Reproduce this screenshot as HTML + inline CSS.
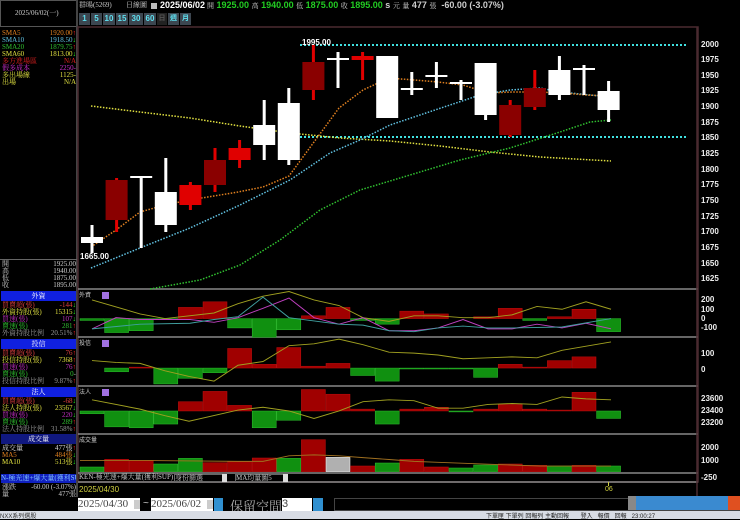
<!DOCTYPE html>
<html><head><meta charset="utf-8"><style>
*{margin:0;padding:0;box-sizing:border-box}
body{width:740px;height:519px;background:#000;overflow:hidden;position:relative;font-family:"Liberation Sans","Noto Sans CJK TC",sans-serif;color:#ddd}
.a{position:absolute;white-space:nowrap}
.s{font-family:"Liberation Serif","Noto Serif CJK SC",serif;font-size:7px;line-height:7.3px}
.row{position:absolute;left:2px;width:74px;height:7.3px}
.row .l{position:absolute;left:0}
.row .r{position:absolute;right:0}
.hd{position:absolute;left:1px;width:75px;height:10px;background:#1020e0;color:#fff;font-size:7px;text-align:center;line-height:10px;font-family:"Liberation Serif","Noto Serif CJK SC",serif}
.btn{position:absolute;top:13px;height:12px;background:#3c4650;color:#5ee0f0;font-size:8px;font-weight:bold;text-align:center;line-height:12px}
.sc{position:absolute;left:701px;font-size:8px;font-weight:bold;color:#eee}
</style></head><body>

<!-- left panel -->
<div class="a" style="left:0;top:0;width:77px;height:27px;border:1px solid #555;"></div>
<div class="a s" style="left:15px;top:10px;color:#ccc">2025/06/02(一)</div>
<div class="a" style="left:76px;top:0;width:2px;height:497px;background:#444"></div>
<div class="s">
<div class="row" style="top:30px;color:#e08020"><span class="l">SMA5</span><span class="r">1920.00<b style="color:#f22">↑</b></span></div>
<div class="row" style="top:37px;color:#60c0e0"><span class="l">SMA10</span><span class="r">1918.50<b style="color:#2e2">↓</b></span></div>
<div class="row" style="top:44px;color:#30c030"><span class="l">SMA20</span><span class="r">1879.75<b style="color:#f22">↑</b></span></div>
<div class="row" style="top:51px;color:#e0e040"><span class="l">SMA60</span><span class="r">1813.00<b style="color:#2e2">↓</b></span></div>
<div class="row" style="top:58px;color:#e02020"><span class="l">多方進場區</span><span class="r">N/A</span></div>
<div class="row" style="top:65px;color:#d030d0"><span class="l">假多成本</span><span class="r">2250-</span></div>
<div class="row" style="top:72px;color:#e0e040"><span class="l">多出場線</span><span class="r">1125-</span></div>
<div class="row" style="top:79px;color:#e0e040"><span class="l">出場</span><span class="r">N/A</span></div>
</div>
<div class="a" style="left:0;top:259px;width:77px;height:1px;background:#666"></div>
<div class="s" style="color:#ccc">
<div class="row" style="top:261px"><span class="l">開</span><span class="r">1925.00</span></div>
<div class="row" style="top:268px"><span class="l">高</span><span class="r">1940.00</span></div>
<div class="row" style="top:275px"><span class="l">低</span><span class="r">1875.00</span></div>
<div class="row" style="top:282px"><span class="l">收</span><span class="r">1895.00</span></div>
</div>
<div class="hd" style="top:291px">外資</div>
<div class="s">
<div class="row" style="top:302px;color:#e04040"><span class="l">買賣超(張)</span><span class="r">-144<b style="color:#2e2">↓</b></span></div>
<div class="row" style="top:309px;color:#e0e040"><span class="l">外資持股(張)</span><span class="r">15315<b style="color:#2e2">↓</b></span></div>
<div class="row" style="top:316px;color:#c030c0"><span class="l">買速(張)</span><span class="r">107<b style="color:#2e2">↓</b></span></div>
<div class="row" style="top:323px;color:#30c030"><span class="l">賣速(張)</span><span class="r">281<b style="color:#f22">↑</b></span></div>
<div class="row" style="top:330px;color:#999"><span class="l">外資持股比例</span><span class="r">20.51%<b style="color:#f22">↑</b></span></div>
</div>
<div class="hd" style="top:339px">投信</div>
<div class="s">
<div class="row" style="top:350px;color:#e04040"><span class="l">買賣超(張)</span><span class="r">76<b style="color:#f22">↑</b></span></div>
<div class="row" style="top:357px;color:#e0e040"><span class="l">投信持股(張)</span><span class="r">7368<b style="color:#f22">↑</b></span></div>
<div class="row" style="top:364px;color:#c030c0"><span class="l">買速(張)</span><span class="r">76<b style="color:#f22">↑</b></span></div>
<div class="row" style="top:371px;color:#30c030"><span class="l">賣速(張)</span><span class="r">0<b style="color:#999">-</b></span></div>
<div class="row" style="top:378px;color:#999"><span class="l">投信持股比例</span><span class="r">9.87%<b style="color:#f22">↑</b></span></div>
</div>
<div class="hd" style="top:387px">法人</div>
<div class="s">
<div class="row" style="top:398px;color:#e04040"><span class="l">買賣超(張)</span><span class="r">-68<b style="color:#2e2">↓</b></span></div>
<div class="row" style="top:405px;color:#e0e040"><span class="l">法人持股(張)</span><span class="r">23567<b style="color:#2e2">↓</b></span></div>
<div class="row" style="top:412px;color:#c030c0"><span class="l">買速(張)</span><span class="r">220<b style="color:#2e2">↓</b></span></div>
<div class="row" style="top:419px;color:#30c030"><span class="l">賣速(張)</span><span class="r">289<b style="color:#f22">↑</b></span></div>
<div class="row" style="top:426px;color:#999"><span class="l">法人持股比例</span><span class="r">31.58%<b style="color:#f22">↑</b></span></div>
</div>
<div class="hd" style="top:434px;background:#101880">成交量</div>
<div class="s">
<div class="row" style="top:445px;color:#ddd"><span class="l">成交量</span><span class="r">477張<b style="color:#f22">↑</b></span></div>
<div class="row" style="top:452px;color:#e08020"><span class="l">MA5</span><span class="r">484張<b style="color:#2e2">↓</b></span></div>
<div class="row" style="top:459px;color:#e0e040"><span class="l">MA10</span><span class="r">513張<b style="color:#2e2">↓</b></span></div>
</div>
<div class="a s" style="left:1px;top:474px;width:75px;height:9px;background:#1020c0;color:#8cf;line-height:9px;overflow:hidden">N-極光速+爆大量(獲利SU</div>
<div class="s">
<div class="row" style="top:484px;color:#ccc"><span class="l">漲跌</span><span class="r">-60.00 (-3.07%)</span></div>
<div class="row" style="top:491px;color:#ccc"><span class="l">量</span><span class="r">477張</span></div>
</div>

<!-- top bar -->
<div class="a s" style="left:79px;top:2px;color:#ccc">群暘(5269)</div>
<div class="a s" style="left:126px;top:2px;color:#ccc">日線圖</div>
<div class="a" style="left:151px;top:3px;width:6px;height:6px;background:#bbb"></div>
<div class="a" style="left:160px;top:0px;font-size:9px;font-weight:bold;color:#fff">2025/06/02</div>
<div class="a" style="left:207px;top:0px;font-size:9px;font-weight:bold;color:#ccc"><span class="s" style="font-weight:normal">開</span> <span style="color:#2c2">1925.00</span> <span class="s" style="font-weight:normal">高</span> <span style="color:#2c2">1940.00</span> <span class="s" style="font-weight:normal">低</span> <span style="color:#2c2">1875.00</span> <span class="s" style="font-weight:normal">收</span> <span style="color:#2c2">1895.00</span> s <span class="s" style="font-weight:normal">元</span> <span class="s" style="font-weight:normal">量</span> 477 <span class="s" style="font-weight:normal">張</span> &nbsp;-60.00 (-3.07%)</div>
<div class="btn" style="left:79px;width:11px">1</div>
<div class="btn" style="left:91px;width:11px">5</div>
<div class="btn" style="left:103px;width:12px">10</div>
<div class="btn" style="left:116px;width:12px">15</div>
<div class="btn" style="left:129px;width:14px">30</div>
<div class="btn" style="left:144px;width:12px">60</div>
<div class="btn" style="left:157px;width:10px;background:#222;color:#555;font-size:7px">日</div>
<div class="btn" style="left:168px;width:11px;font-size:7px">週</div>
<div class="btn" style="left:180px;width:11px;font-size:7px">月</div>

<svg class="a" style="left:0;top:0" width="740" height="519" id="sv">
<rect x="78" y="27" width="620" height="455" fill="none" stroke="#4a2a30" stroke-width="1.5"/>
<g stroke="#888" stroke-width="1.5">
<line x1="78" y1="289" x2="698" y2="289"/><line x1="78" y1="337" x2="698" y2="337"/><line x1="78" y1="386" x2="698" y2="386"/><line x1="78" y1="434" x2="698" y2="434"/><line x1="78" y1="473" x2="698" y2="473"/><line x1="78" y1="482" x2="698" y2="482"/></g>
<line x1="697" y1="27" x2="697" y2="497" stroke="#4a2a30" stroke-width="1.5"/>
<!-- main dotted lines -->
<line x1="300" y1="45" x2="686" y2="45" stroke="#40e0e0" stroke-width="2" stroke-dasharray="2,2"/>
<line x1="300" y1="137" x2="686" y2="137" stroke="#40e0e0" stroke-width="2" stroke-dasharray="2,2"/>
<polyline fill="none" stroke="#e0e040" stroke-width="1.5" stroke-dasharray="1.5,1.5" points="91,106 140,112 190,118 240,126 290,133 340,138 390,141 440,146 490,152 540,157 575,159 611,161"/>
<polyline fill="none" stroke="#30c030" stroke-width="1.5" stroke-dasharray="1.5,1.5" points="150,289 200,280 240,265 280,240 320,210 360,190 410,175 460,160 510,148 560,132 590,122 611,120"/>
<polyline fill="none" stroke="#60c0e0" stroke-width="1.5" stroke-dasharray="1.5,1.5" points="91,268 140,248 190,228 240,205 290,180 330,153 360,140 390,125 420,115 450,105 480,95 510,90 540,88 560,92 590,95 611,97"/>
<polyline fill="none" stroke="#e08020" stroke-width="1.5" stroke-dasharray="1.5,1.5" points="91,247 116,230 140,212 165,205 189,200 214,196 238,192 263,187 289,176 314,142 339,108 363,90 389,78 414,80 438,82 463,85 488,93 512,92 537,92 562,93 586,95 611,96"/>
<g id="cd"></g>
<g transform="matrix(1,0,0,0.9333,0,19)">
<g id="sub"></g>
<polyline fill="none" stroke="#a0a020" stroke-width="1" points="92,301 140,316 165,321 214,315 238,305 263,297 289,292 314,301 339,307 363,320 389,324 414,318 438,318 463,320 488,320 512,317 537,308 562,311 586,303 611,311"/>
<polyline fill="none" stroke="#c040c0" stroke-width="1" points="92,332 116,320 140,322 190,322 214,325 238,320 263,310 289,299 314,320 339,327 363,320 389,334 414,334 438,331 463,322 488,332 512,332 537,327 562,331 586,326 611,332"/>
<polyline fill="none" stroke="#40a0a0" stroke-width="1" points="92,332 140,327 190,326 214,322 238,319 263,298 289,320 339,327 363,328 389,334 414,335 438,331 463,329 488,331 512,331 562,330 611,321"/>
<polyline fill="none" stroke="#a0a020" stroke-width="1" points="92,366 116,368 140,369 165,377 189,383 214,388 238,371 263,367 289,350 314,348 339,343 363,349 389,357 414,358 438,360 463,364 488,363 512,362 537,363 562,355 611,346"/>
<polyline fill="none" stroke="#a0a020" stroke-width="1" points="92,408 140,418 165,425 189,431 238,419 263,416 289,420 314,428 339,420 363,410 389,408 414,409 438,417 463,417 488,413 512,412 537,413 562,405 586,407 611,408"/>
<polyline fill="none" stroke="#a07020" stroke-width="1" points="80,473 140,473 238,474 263,474 289,468 314,467 339,468 363,470 389,472 414,474 438,475 488,477 540,479 611,479"/>
</g>
</svg>

<div class="a" style="left:302px;top:38px;font-size:8px;font-weight:bold;color:#fff">1995.00</div>
<div class="a" style="left:80px;top:252px;font-size:8px;font-weight:bold;color:#fff">1665.00</div>
<div class="a" style="left:79px;top:290px;font-size:6px;color:#ccc">外資</div>
<div class="a" style="left:79px;top:338px;font-size:6px;color:#ccc">投信</div>
<div class="a" style="left:79px;top:387px;font-size:6px;color:#ccc">法人</div>
<div class="a" style="left:79px;top:435px;font-size:6px;color:#ccc">成交量</div>
<div class="a" style="left:102px;top:292px;width:7px;height:7px;background:#a070e0"></div>
<div class="a" style="left:102px;top:340px;width:7px;height:7px;background:#a070e0"></div>
<div class="a" style="left:102px;top:389px;width:7px;height:7px;background:#a070e0"></div>

<div class="sc" style="top:40px">2000</div><div class="sc" style="top:55px">1975</div><div class="sc" style="top:71px">1950</div><div class="sc" style="top:86px">1925</div><div class="sc" style="top:102px">1900</div><div class="sc" style="top:118px">1875</div><div class="sc" style="top:133px">1850</div><div class="sc" style="top:149px">1825</div><div class="sc" style="top:165px">1800</div><div class="sc" style="top:180px">1775</div><div class="sc" style="top:196px">1750</div><div class="sc" style="top:212px">1725</div><div class="sc" style="top:227px">1700</div><div class="sc" style="top:243px">1675</div><div class="sc" style="top:259px">1650</div><div class="sc" style="top:274px">1625</div>
<div class="sc" style="top:295px">200</div><div class="sc" style="top:305px">100</div><div class="sc" style="top:314px">0</div><div class="sc" style="top:323px">-100</div>
<div class="sc" style="top:349px">100</div><div class="sc" style="top:365px">0</div>
<div class="sc" style="top:394px">23600</div><div class="sc" style="top:406px">23400</div><div class="sc" style="top:418px">23200</div>
<div class="sc" style="top:443px">2000</div><div class="sc" style="top:456px">1000</div><div class="sc" style="top:473px">-250</div>

<!-- timeline row -->
<div class="a s" style="left:79px;top:474px;color:#ccc">KEN-極光速+爆大量(獲利SUP)</div>
<div class="a s" style="left:174px;top:474px;width:50px;height:8px;border:1px solid #666;color:#ccc;background:#000">身份篩選</div>
<div class="a" style="left:222px;top:474px;width:5px;height:8px;background:#ddd"></div>
<div class="a s" style="left:235px;top:474px;width:50px;height:8px;border:1px solid #666;color:#ccc;background:#000">MA均量圖5</div>
<div class="a" style="left:283px;top:474px;width:5px;height:8px;background:#ddd"></div>
<div class="a" style="left:79px;top:485px;font-size:8px;color:#d0d040">2025/04/30</div>
<div class="a" style="left:608px;top:482px;width:1px;height:4px;background:#d0d040"></div>
<div class="a" style="left:605px;top:486px;font-size:7px;color:#d0d040">06</div>
<!-- date row -->
<div class="a" style="left:77px;top:497px;width:663px;height:15px;background:#000"></div>
<div class="a" style="left:78px;top:498px;width:62px;height:13px;background:#fff;color:#444;font-size:11px;line-height:13px;font-family:'Liberation Serif',serif">2025/04/30</div>
<div class="a" style="left:134px;top:500px;width:6px;height:9px;background:#ccc"></div>
<div class="a" style="left:143px;top:498px;color:#ccc;font-size:10px">~</div>
<div class="a" style="left:151px;top:498px;width:62px;height:13px;background:#fff;color:#444;font-size:11px;line-height:13px;font-family:'Liberation Serif',serif">2025/06/02</div>
<div class="a" style="left:207px;top:500px;width:6px;height:9px;background:#ccc"></div>
<div class="a" style="left:214px;top:498px;width:9px;height:13px;background:#3090d0"></div>
<div class="a" style="left:230px;top:496px;color:#aaa;font-size:13px;font-family:'Noto Serif CJK SC',serif">保留空間</div>
<div class="a" style="left:282px;top:498px;width:30px;height:13px;background:#fff;color:#444;font-size:11px;line-height:13px">3</div>
<div class="a" style="left:313px;top:498px;width:10px;height:13px;background:#3090d0"></div>
<div class="a" style="left:334px;top:498px;width:406px;height:13px;border:1px solid #444"></div>
<div class="a" style="left:636px;top:496px;width:104px;height:14px;background:#3a8ad0"></div>
<div class="a" style="left:628px;top:496px;width:8px;height:14px;background:#888"></div>
<div class="a" style="left:728px;top:496px;width:12px;height:14px;background:#e05020"></div>
<!-- status bar -->
<div class="a" style="left:0;top:511px;width:740px;height:8px;background:#d8dce4"></div>
<div class="a" style="left:0;top:511px;font-size:6px;color:#333">NXX系列選股</div>
<div class="a" style="left:486px;top:511px;font-size:6px;color:#222">下單匣 下單列 回報列 主動回報 &nbsp; &nbsp; &nbsp; 登入 &nbsp; 報價 &nbsp; 回報 &nbsp; 23:00:27</div>

<script>
var NS="http://www.w3.org/2000/svg";
function el(g,t,a){var e=document.createElementNS(NS,t);for(var k in a)e.setAttribute(k,a[k]);g.appendChild(e);}
var cd=document.getElementById('cd');
var C=[['w',237,243,225,253],['d',180,220,178,232],['w',176,178,176,248],['w',192,225,158,232],['r',185,205,182,210],['d',160,185,148,192],['r',148,160,140,168],['w',125,145,100,160],['w',103,160,88,165],['d',62,90,45,100],['w',58,60,52,88],['r',56,60,52,80],['w',56,118,56,118],['w',88,89,72,95],['w',75,76,62,88],['w',82,83,80,100],['w',63,115,63,120],['d',105,135,100,137],['d',88,107,70,110],['w',70,95,56,100],['w',68,69,65,95],['w',91,110,81,122]];
C.forEach(function(c,i){var x=92+24.6*i;var col=c[0]=='w'?'#fff':(c[0]=='d'?'#8a0000':'#e00000');
el(cd,'rect',{x:x-1.5,y:c[3],width:3,height:c[4]-c[3],fill:c[0]=='w'?'#fff':'#e00000'});
var h=Math.max(c[2]-c[1],2);el(cd,'rect',{x:x-11,y:c[1],width:22,height:h,fill:col});});
var sub=document.getElementById('sub');
function panel(z,arr){arr.forEach(function(v,i){if(v==0)return;var x=80+24.6*i;var t=v<0?z+v:z;var h=Math.abs(v);
el(sub,'rect',{x:x,y:t,width:24,height:h,fill:v<0?'#a00000':'#109010',stroke:v<0?'#c01010':'#30c030','stroke-width':0.5});});}
var k=1/2.8;
panel(321,[2,15,13,1,-12,-18,10,20,12,-3,-12,2,6,-8,-5,0,-2,-11,2,-2,-10,14]);
panel(374,[0,4,-1,17,11,5,-21,-4,-22,-2,-5,8,14,1,1,1,10,-4,-1,-8,-12,0]);
panel(420,[3,17,18,14,-10,-21,-6,18,10,-23,-18,-2,14,-2,-4,1,-2,-7,-2,-1,-20,8]);
var vb=485,vt=[546,523,526,537,520,533,530,519,520,464,517,543,534,523,546,549,540,537,541,543,541,543];
var cols=['g','r','r','g','g','r','r','r','g','r','w','r','g','r','r','g','g','r','r','g','r','g'];
vt.forEach(function(t,i){var x=80+24.6*i;var yy=285+t*k;var c=cols[i];
el(sub,'rect',{x:x,y:yy,width:24,height:vb-yy,fill:c=='g'?'#109010':c=='r'?'#a00000':'#b0b0b0',stroke:c=='g'?'#30c030':c=='r'?'#c01010':'#fff','stroke-width':0.5});});
</script>
</body></html>
